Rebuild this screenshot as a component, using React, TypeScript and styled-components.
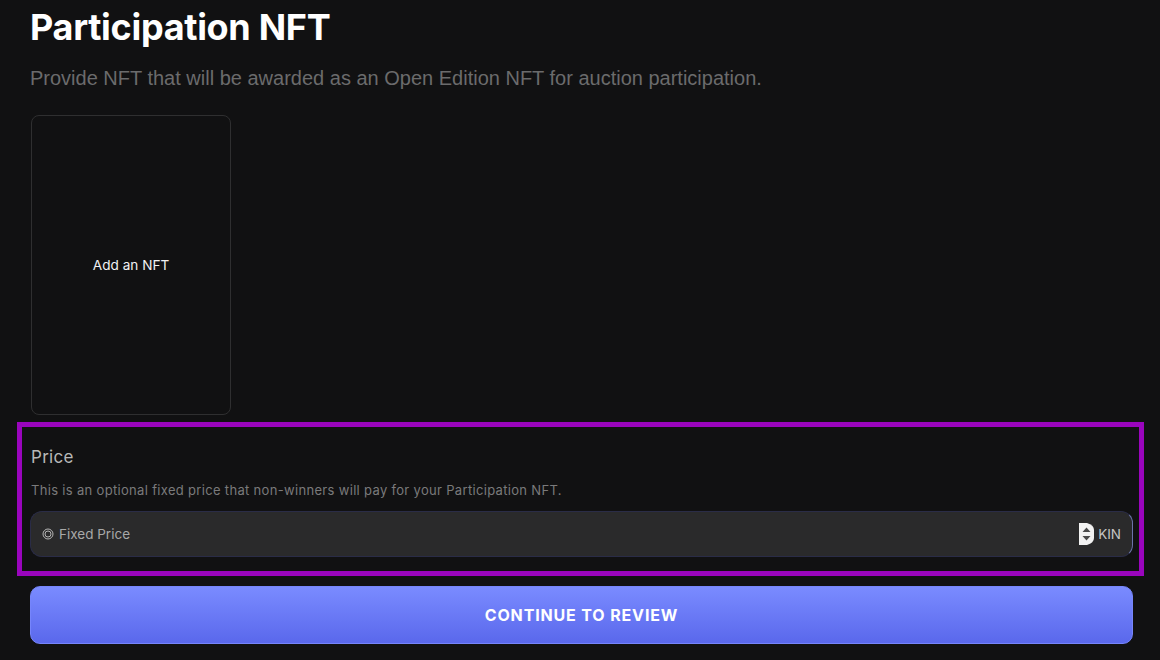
import React from "react";
import styled, { createGlobalStyle } from "styled-components";

const Global = createGlobalStyle`
  html, body { margin: 0; padding: 0; background: #111112; height: 660px; overflow: hidden; }
  * { box-sizing: border-box; }
`;

const Page = styled.div`
  width: 1160px;
  height: 660px;
  padding: 0 27px 0 30px;
  font-family: Inter, "Liberation Sans", sans-serif;
  overflow: hidden;
`;

const Title = styled.h1`
  margin: 0;
  padding-top: 5px;
  height: 45px;
  font-size: 36px;
  line-height: 45px;
  font-weight: 700;
  color: #fff;
  letter-spacing: -0.3px;
`;

const Subtitle = styled.p`
  margin: 22px 0 0;
  height: 22px;
  font-size: 20px;
  line-height: 22px;
  color: #6b6b6c;
  font-family: "Liberation Sans", Arial, sans-serif;
`;

const NftCard = styled.button`
  display: flex;
  align-items: center;
  justify-content: center;
  margin: 26px 0 0 1px;
  width: 200px;
  height: 300px;
  background: transparent;
  border: 1px solid #2f2f30;
  border-radius: 8px;
  color: #f2f2f2;
  font: 400 13.6px/20px Inter, sans-serif;
`;

const PriceSection = styled.section`
  margin: 7px 0 0 -13px;
  width: 1127px;
  height: 154px;
  border: 5px solid #9a05bd;
  padding: 18px 6px 0 9px;
`;

const PriceLabel = styled.div`
  font-size: 17px;
  line-height: 24px;
  letter-spacing: 0.3px;
  font-weight: 400;
  color: #b8b8b8;
`;

const PriceHint = styled.div`
  margin-top: 13px;
  font-size: 13px;
  line-height: 16px;
  letter-spacing: 0.32px;
  color: #7a7a7b;
`;

const Field = styled.div`
  display: flex;
  align-items: center;
  margin: 13px 0 0 -1px;
  height: 46px;
  padding: 0 11px;
  background: #2a2a2b;
  border: 1px solid #2a2c47;
  border-right-color: #6a74ab;
  border-radius: 12px;
`;

const Coin = styled.svg`
  width: 12px;
  height: 12px;
  flex: none;
  margin-right: 5px;
`;

const PriceInput = styled.input`
  flex: 1;
  min-width: 0;
  height: 100%;
  padding: 0;
  background: transparent;
  border: 0;
  outline: 0;
  color: #bdbdbd;
  font: 400 13.5px/20px Inter, sans-serif;
  &::placeholder { color: #a8a8a8; opacity: 1; }
`;

const Spinner = styled.svg`
  width: 15px;
  height: 22px;
  flex: none;
  margin-right: 4px;
`;

const Unit = styled.span`
  font-size: 13.5px;
  line-height: 20px;
  color: #c4c4c4;
`;

const Continue = styled.button`
  display: block;
  margin: 10px 0 0;
  width: 100%;
  height: 58px;
  background: linear-gradient(180deg, #7a8bff 0%, #5a68ec 100%);
  border: 1px solid #7685fb;
  border-radius: 10px;
  color: #fff;
  font: 700 16px/20px Inter, sans-serif;
  letter-spacing: 0.85px;
  text-transform: uppercase;
`;

export default function App() {
  return (
    <Page>
      <Global />
      <Title>Participation NFT</Title>
      <Subtitle>Provide NFT that will be awarded as an Open Edition NFT for auction participation.</Subtitle>
      <NftCard>Add an NFT</NftCard>
      <PriceSection>
        <PriceLabel>Price</PriceLabel>
        <PriceHint>This is an optional fixed price that non-winners will pay for your Participation NFT.</PriceHint>
        <Field>
          <Coin viewBox="0 0 12 12" fill="none" stroke="#b5b5b5">
            <circle cx="6" cy="6" r="5" strokeWidth="1" />
            <circle cx="6" cy="6" r="3" strokeWidth="1" />
          </Coin>
          <PriceInput placeholder="Fixed Price" readOnly />
          <Spinner viewBox="0 0 15 22">
            <path d="M0 0H8Q15 2 15 7V15Q15 20 8 22H0Z" fill="#f2f2f2" />
            <path d="M7.5 4.5L11.5 9H3.5Z M7.5 17.5L3.5 13H11.5Z" fill="#4a4a4a" />
          </Spinner>
          <Unit>KIN</Unit>
        </Field>
      </PriceSection>
      <Continue>Continue to review</Continue>
    </Page>
  );
}
